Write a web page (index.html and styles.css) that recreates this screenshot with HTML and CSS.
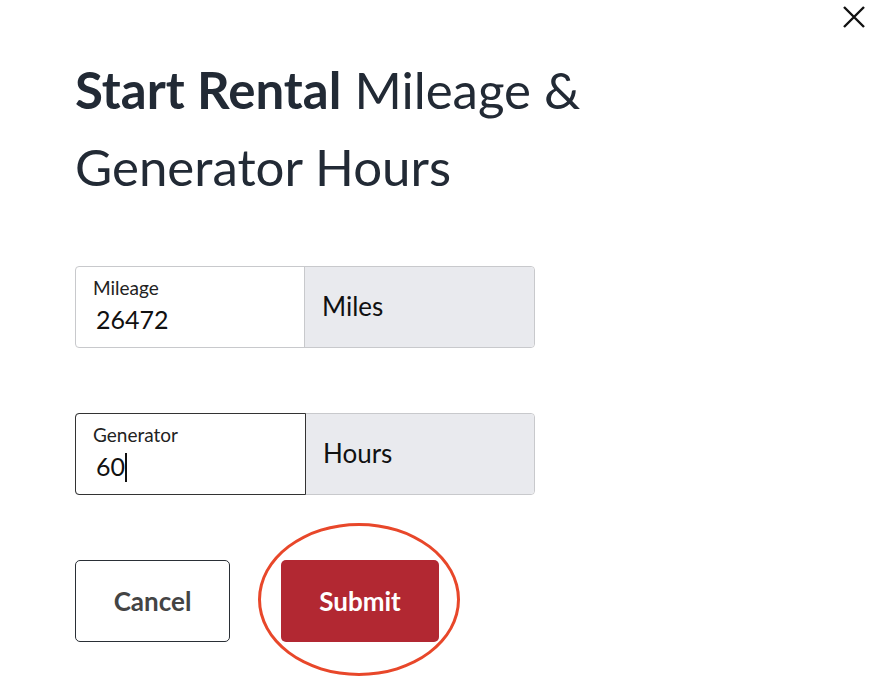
FILE: index.html
```html
<!DOCTYPE html>
<html>
<head>
<meta charset="utf-8">
<link rel="stylesheet" href="styles.css">
</head>
<body>
<div class="modal">
  <button class="close" aria-label="Close">
    <svg width="26" height="26" viewBox="0 0 26 26"><path d="M3 3L23 23M23 3L3 23" stroke="#111" stroke-width="2.4" fill="none"/></svg>
  </button>
  <h1 class="title"><strong>Start Rental</strong> Mileage &amp; Generator Hours</h1>
  <div class="fields">
    <div class="group">
      <div class="field">
        <span class="label">Mileage</span>
        <span class="value">26472</span>
      </div>
      <div class="addon">Miles</div>
    </div>
    <div class="group focused">
      <div class="field">
        <span class="label">Generator</span>
        <span class="value">60<span class="caret"></span></span>
      </div>
      <div class="addon">Hours</div>
    </div>
  </div>
  <div class="actions">
    <button class="btn cancel">Cancel</button>
    <div class="submit-wrap">
      <button class="btn submit">Submit</button>
      <span class="ring"></span>
    </div>
  </div>
</div>
</body>
</html>
```
FILE: styles.css
```css
html, body {
  margin: 0;
  padding: 0;
  background: #fff;
}
body {
  font-family: Lato, "Open Sans", sans-serif;
  color: #222a35;
}
.modal {
  position: relative;
  width: 872px;
  height: 690px;
  padding: 51px 0 0 75px;
  box-sizing: border-box;
}
.close {
  position: absolute;
  top: 4px;
  right: 5px;
  background: none;
  border: 0;
  padding: 0;
  width: 26px;
  height: 26px;
}
.title {
  margin: 0;
  width: 560px;
  font-size: 51px;
  line-height: 77px;
  font-weight: 400;
  color: #222a35;
}
.title strong {
  font-weight: 700;
}
.fields {
  margin-top: 61px;
  display: flex;
  flex-direction: column;
  gap: 65px;
}
.group {
  display: flex;
  width: 460px;
  height: 82px;
  border: 1px solid #c8c9cc;
  border-radius: 4px;
  box-sizing: border-box;
}
.field {
  width: 229px;
  display: flex;
  flex-direction: column;
  padding: 10px 0 0 17px;
  box-sizing: border-box;
  border-right: 1px solid #c8c9cc;
}
.focused .field {
  border: 1px solid #333;
  border-radius: 4px 0 0 4px;
  margin: -1px 0 -1px -1px;
  width: 231px;
}
.label {
  font-size: 19px;
  line-height: 22px;
  color: #222;
}
.value {
  font-size: 25px;
  line-height: 30px;
  margin-top: 5px;
  padding-left: 3px;
  color: #111;
}
.caret {
  display: inline-block;
  width: 2px;
  height: 29px;
  background: #111;
  vertical-align: -6px;
}
.addon {
  flex: 1;
  background: #e9eaee;
  display: flex;
  align-items: center;
  padding-left: 17px;
  padding-bottom: 2px;
  font-size: 26px;
  color: #111;
  border-radius: 0 4px 4px 0;
}
.actions {
  margin-top: 65px;
  display: flex;
  gap: 51px;
}
.btn {
  height: 82px;
  border-radius: 5px;
  font-family: Lato, "Open Sans", sans-serif;
  font-weight: 700;
  font-size: 26px;
}
.cancel {
  width: 155px;
  background: #fff;
  border: 1px solid #2a2f36;
  color: #444;
}
.submit-wrap {
  position: relative;
}
.submit {
  width: 158px;
  background: #b22832;
  border: 0;
  color: #fff;
}
.ring {
  position: absolute;
  left: -23px;
  top: -37px;
  width: 202px;
  height: 153px;
  border: 3px solid #e8472a;
  border-radius: 50%;
  box-sizing: border-box;
  pointer-events: none;
}
```
